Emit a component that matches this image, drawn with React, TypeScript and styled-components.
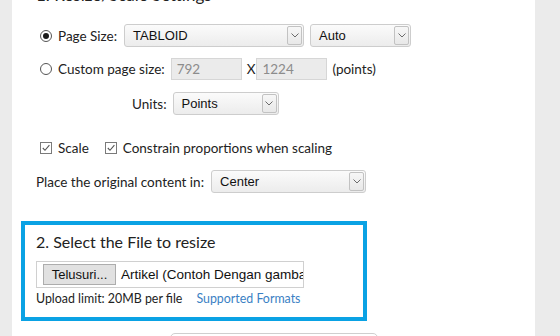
import { FC } from "react";
import styled, { createGlobalStyle } from "styled-components";

const GlobalStyle = createGlobalStyle`
	html, body {
		margin:0;
		padding:0;
	}
	body {
		width:560px;
		height:336px;
		overflow:hidden;
		background:#fff;
		font-family:Lato, "Open Sans", sans-serif;
		color:#222;
	}
`;

const Chevron:FC = () => (
	<svg width="8" height="5" viewBox="0 0 8 5">
		<path d="M0.5 0.5 L4 4 L7.5 0.5" fill="none" stroke="#6b6b6b" strokeWidth="1" />
	</svg>
);

interface ISelectProps {
	value:string;
	width:number;
}

const Select:FC<ISelectProps> = props => (
	<SelectBox $width={ props.width }>
		<SelectText>{ props.value }</SelectText>
		<ArrowBox>
			<Chevron />
		</ArrowBox>
	</SelectBox>
);

const Radio:FC<{ checked?:boolean }> = props => (
	<RadioCircle>
		{ props.checked ? <RadioDot /> : null }
	</RadioCircle>
);

const Check:FC = () => (
	<CheckBox>
		<svg width="10" height="10" viewBox="0 0 10 10">
			<path d="M1.8 5 L4 7.3 L8.4 2.2" fill="none" stroke="#555" strokeWidth="1.1" />
		</svg>
	</CheckBox>
);

export default function App() {
	return (
		<>
			<GlobalStyle />
			<Page>
				<Gutter $width={ 12 } />
				<Main>
					<Heading>1. Resize/Scale Settings</Heading>

					<Row $top={ 19 } $height={ 23 } $indent={ 4 }>
						<Radio checked />
						<Label $left={ 6 }>Page Size:</Label>
						<Spacer $w={ 7 } />
						<Select value="TABLOID" width={ 180 } />
						<Spacer $w={ 6 } />
						<Select value="Auto" width={ 101 } />
					</Row>

					<Row $top={ 11 } $height={ 22 } $indent={ 4 }>
						<Radio />
						<Label $left={ 6 }>Custom page size:</Label>
						<Spacer $w={ 6 } />
						<NumInput>792</NumInput>
						<Label $left={ 5 }>X</Label>
						<Spacer $w={ 1 } />
						<NumInput>1224</NumInput>
						<Label $left={ 5 }>(points)</Label>
					</Row>

					<Row $top={ 12 } $height={ 23 } $indent={ 96 }>
						<Label>Units:</Label>
						<Spacer $w={ 6 } />
						<Select value="Points" width={ 106 } />
					</Row>

					<Row $top={ 23 } $height={ 20 } $indent={ 4 }>
						<Check />
						<Label $left={ 6 }>Scale</Label>
						<Spacer $w={ 16 } />
						<Check />
						<Label $left={ 6 }>Constrain proportions when scaling</Label>
					</Row>

					<Row $top={ 12 } $height={ 23 } $indent={ 0 }>
						<Label>Place the original content in:</Label>
						<Spacer $w={ 7 } />
						<Select value="Center" width={ 155 } />
					</Row>

					<FileCard>
						<SubHeading>2. Select the File to resize</SubHeading>
						<FileField>
							<BrowseButton>Telusuri...</BrowseButton>
							<FileName>Artikel (Contoh Dengan gambar).docx</FileName>
						</FileField>
						<Hint>
							Upload limit: 20MB per file
							<Link>Supported Formats</Link>
						</Hint>
					</FileCard>

					<NextBox />
				</Main>
				<Gutter $width={ 25 } />
			</Page>
		</>
	);
}

const Page = styled.div`
	display:flex;
	height:336px;
	overflow:hidden;
`;

const Gutter = styled.div<{ $width:number }>`
	width:${ p => p.$width }px;
	flex:none;
	background:#ebebeb;
`;

const Main = styled.div`
	flex:1;
	display:flex;
	flex-direction:column;
	align-items:flex-start;
	padding-left:24px;
	background:#fff;
	overflow:hidden;
`;

const Heading = styled.h2`
	flex:none;
	margin:-15px 0 0;
	font-size:17px;
	line-height:20px;
	font-weight:400;
	color:#222;
	white-space:nowrap;
`;

const Row = styled.div<{ $top:number; $height:number; $indent:number }>`
	flex:none;
	display:flex;
	align-items:center;
	margin-top:${ p => p.$top }px;
	height:${ p => p.$height }px;
	padding-left:${ p => p.$indent }px;
	font-size:13px;
	white-space:nowrap;
`;

const Spacer = styled.span<{ $w:number }>`
	display:inline-block;
	width:${ p => p.$w }px;
	flex:none;
`;

const Label = styled.span<{ $left?:number }>`
	margin-left:${ p => p.$left || 0 }px;
	font-size:13.5px;
	color:#222;
`;

const RadioCircle = styled.span`
	width:12px;
	height:12px;
	box-sizing:border-box;
	border:1px solid #555;
	border-radius:50%;
	background:#fff;
	display:flex;
	align-items:center;
	justify-content:center;
	flex:none;
`;

const RadioDot = styled.span`
	width:6px;
	height:6px;
	border-radius:50%;
	background:#1a1a1a;
`;

const CheckBox = styled.span`
	width:12px;
	height:12px;
	box-sizing:border-box;
	border:1px solid #7a7a7a;
	background:#fff;
	display:flex;
	align-items:center;
	justify-content:center;
	flex:none;
`;

const SelectBox = styled.div<{ $width:number }>`
	width:${ p => p.$width }px;
	height:23px;
	box-sizing:border-box;
	display:flex;
	align-items:stretch;
	border:1px solid #cdcdcd;
	border-radius:3px;
	background:linear-gradient(#fbfbfb, #ececec);
	flex:none;
`;

const SelectText = styled.span`
	flex:1;
	display:flex;
	align-items:center;
	padding-left:8px;
	font-family:"Liberation Sans", Arial, sans-serif;
	font-size:13px;
	color:#111;
	overflow:hidden;
`;

const ArrowBox = styled.span`
	width:15px;
	margin:1px;
	box-sizing:border-box;
	border:1px solid #c2c2c2;
	border-radius:2px;
	background:linear-gradient(#f7f7f7, #e8e8e8);
	display:flex;
	align-items:center;
	justify-content:center;
`;

const NumInput = styled.span`
	width:71px;
	height:22px;
	box-sizing:border-box;
	display:flex;
	align-items:center;
	padding-left:5px;
	border:1px solid #d6d6d6;
	background:#ebebeb;
	color:#8c8c8c;
	font-size:13.5px;
	flex:none;
`;

const FileCard = styled.div`
	flex:none;
	margin:28px 0 0 -15px;
	width:346px;
	height:100px;
	box-sizing:border-box;
	border:4px solid #0aa2e4;
	padding:7px 0 0 11px;
	display:flex;
	flex-direction:column;
	align-items:flex-start;
`;

const SubHeading = styled.h3`
	flex:none;
	margin:0;
	font-size:16px;
	line-height:20px;
	font-weight:400;
	color:#222;
`;

const FileField = styled.div`
	flex:none;
	margin-top:9px;
	width:268px;
	height:27px;
	box-sizing:border-box;
	border:1px solid #d0d0d0;
	display:flex;
	align-items:center;
	padding-left:6px;
	overflow:hidden;
	white-space:nowrap;
`;

const BrowseButton = styled.span`
	width:73px;
	height:21px;
	box-sizing:border-box;
	border:1px solid #adadad;
	background:#e1e1e1;
	display:flex;
	align-items:center;
	justify-content:center;
	font-family:"Liberation Sans", Arial, sans-serif;
	font-size:13px;
	color:#111;
	flex:none;
`;

const FileName = styled.span`
	margin-left:5px;
	font-family:"Liberation Sans", Arial, sans-serif;
	font-size:13.5px;
	color:#111;
`;

const Hint = styled.div`
	flex:none;
	margin-top:3px;
	font-size:12.4px;
	line-height:16px;
	color:#222;
	white-space:nowrap;
`;

const Link = styled.span`
	margin-left:14px;
	color:#3b7fc4;
`;

const NextBox = styled.div`
	flex:none;
	margin:12px 0 0 134px;
	width:208px;
	height:30px;
	box-sizing:border-box;
	border:1px solid #cfcfcf;
	border-radius:5px;
`;
